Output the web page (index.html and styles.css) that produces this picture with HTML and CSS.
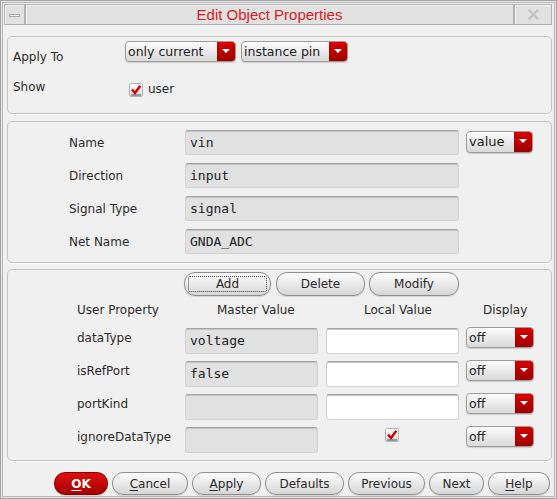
FILE: index.html
```html
<!DOCTYPE html>
<html>
<head>
<meta charset="utf-8">
<link rel="stylesheet" href="styles.css">
</head>
<body>
<div class="win">
  <div class="titlebar">
    <div class="tb-box tb-menu"><span class="dash"></span></div>
    <div class="tb-box tb-title">Edit Object Properties</div>
    <div class="tb-box tb-close">
      <svg width="13" height="13" viewBox="0 0 13 13"><path d="M2 2 L11 11 M11 2 L2 11" stroke="#c4c4c4" stroke-width="2.4" fill="none"/><path d="M1.5 4 V1.5 H4 M9 1.5 H11.5 V4 M11.5 9 V11.5 H9 M4 11.5 H1.5 V9" stroke="#d0d0d0" stroke-width="1" fill="none"/></svg>
    </div>
  </div>

  <section class="frame f1">
    <div class="row r-apply">
      <span class="lbl">Apply To</span>
      <div class="combo c-only"><span class="ctext">only current</span><span class="carrow"></span></div>
      <div class="combo c-inst"><span class="ctext">instance pin</span><span class="carrow"></span></div>
    </div>
    <div class="row r-show">
      <span class="lbl lbl-show">Show</span>
      <span class="check">
        <svg width="14" height="14" viewBox="0 0 14 14"><defs><linearGradient id="cg" x1="0" y1="0" x2="0" y2="1"><stop offset="0" stop-color="#ffffff"/><stop offset="1" stop-color="#d8d8d8"/></linearGradient></defs><rect x="0.5" y="0.5" width="13" height="13" rx="1.5" fill="url(#cg)" stroke="#b4b4b4"/><path d="M3 6.5 L6 10 L11.3 2.8" stroke="#d10000" stroke-width="2.4" fill="none"/><path d="M2 12 H12" stroke="#555" stroke-width="1"/></svg>
      </span>
      <span class="user">user</span>
    </div>
  </section>

  <section class="frame f2">
    <div class="prow">
      <span class="plbl">Name</span>
      <div class="field wide">vin</div>
      <div class="combo c-value"><span class="ctext">value</span><span class="carrow"></span></div>
    </div>
    <div class="prow">
      <span class="plbl">Direction</span>
      <div class="field wide">input</div>
    </div>
    <div class="prow">
      <span class="plbl">Signal Type</span>
      <div class="field wide">signal</div>
    </div>
    <div class="prow">
      <span class="plbl">Net Name</span>
      <div class="field wide">GNDA_ADC</div>
    </div>
  </section>

  <section class="frame f3">
    <div class="btnrow">
      <button class="btn b-add"><span class="focus">Add</span></button>
      <button class="btn b-del">Delete</button>
      <button class="btn b-mod">Modify</button>
    </div>
    <div class="hdr">
      <span class="h-prop">User Property</span>
      <span class="h-master">Master Value</span>
      <span class="h-local">Local Value</span>
      <span class="h-disp">Display</span>
    </div>
    <div class="urow">
      <span class="ulbl">dataType</span>
      <div class="field master">voltage</div>
      <div class="field local"></div>
      <div class="combo c-off"><span class="ctext">off</span><span class="carrow"></span></div>
    </div>
    <div class="urow">
      <span class="ulbl">isRefPort</span>
      <div class="field master">false</div>
      <div class="field local"></div>
      <div class="combo c-off"><span class="ctext">off</span><span class="carrow"></span></div>
    </div>
    <div class="urow">
      <span class="ulbl">portKind</span>
      <div class="field master"></div>
      <div class="field local"></div>
      <div class="combo c-off"><span class="ctext">off</span><span class="carrow"></span></div>
    </div>
    <div class="urow">
      <span class="ulbl">ignoreDataType</span>
      <div class="field master"></div>
      <div class="localcheck">
        <svg width="14" height="14" viewBox="0 0 14 14"><defs><linearGradient id="cg2" x1="0" y1="0" x2="0" y2="1"><stop offset="0" stop-color="#ffffff"/><stop offset="1" stop-color="#d8d8d8"/></linearGradient></defs><rect x="0.5" y="0.5" width="13" height="13" rx="1.5" fill="url(#cg2)" stroke="#b4b4b4"/><path d="M3 6.5 L6 10 L11.3 2.8" stroke="#d10000" stroke-width="2.4" fill="none"/><path d="M2 12 H12" stroke="#555" stroke-width="1"/></svg>
      </div>
      <div class="combo c-off"><span class="ctext">off</span><span class="carrow"></span></div>
    </div>
  </section>

  <div class="footer">
    <button class="btn ok"><u>O</u>K</button>
    <button class="btn w-cancel"><u>C</u>ancel</button>
    <button class="btn w-apply"><u>A</u>pply</button>
    <button class="btn w-def">Defaults</button>
    <button class="btn w-prev">Previous</button>
    <button class="btn w-next">Next</button>
    <button class="btn w-help"><u>H</u>elp</button>
  </div>
</div>
</body>
</html>
```

FILE: styles.css
```css
* { box-sizing: border-box; }
html, body { margin: 0; padding: 0; }
body {
  width: 557px;
  height: 499px;
  overflow: hidden;
  background: #f0f0f0;
  font-family: "DejaVu Sans", sans-serif;
  font-size: 12px;
  color: #2c2c2c;
}
.win {
  width: 557px;
  height: 499px;
  border: 1px solid #a2a2a2;
  box-shadow: inset 0 0 0 1px #e6e6e6, inset 0 0 0 2px #b8b8b8;
  padding: 3px 4px 0 3px;
  display: flex;
  flex-direction: column;
  background: #f0f0f0;
}
.titlebar {
  display: flex;
  height: 21px;
}
.tb-box {
  background: #e1e1e1;
  border: 1px solid #b2b2b2;
  box-shadow: inset 1px 1px 0 #f4f4f4;
  height: 21px;
}
.tb-menu {
  width: 21px;
  display: flex;
  align-items: center;
  justify-content: center;
}
.dash {
  display: block;
  width: 11px;
  height: 3px;
  background: #fafafa;
  border: 1px solid #a9a9a9;
  margin-top: 1px;
}
.tb-title {
  flex: 1;
  text-align: center;
  color: #d11f1f;
  font-family: "Liberation Sans", sans-serif;
  font-size: 15px;
  line-height: 19px;
}
.tb-close {
  width: 38px;
  display: flex;
  align-items: center;
  justify-content: center;
}

.frame {
  border: 1px solid #c4c4c4;
  border-radius: 5px;
  margin-left: 3px;
  box-shadow: 0 1px 0 #fbfbfb;
}
.f1 {
  margin-top: 11px;
  height: 78px;
  padding: 4px 0 0 5px;
}
.row { display: flex; align-items: flex-start; }
.r-apply { height: 21px; }
.lbl {
  width: 112px;
  line-height: 14px;
  padding-top: 9px;
}
.r-show { margin-top: 17px; height: 21px; }
.lbl-show { padding-top: 1px; }
.check { margin: 4px 0 0 4px; display: block; height: 14px; }
.check svg, .localcheck svg { display: block; }
.user { margin-left: 5px; padding-top: 3px; line-height: 14px; }

.combo {
  display: flex;
  height: 21px;
  border: 1px solid #9c9c9c;
  border-radius: 4px;
  background: linear-gradient(#fcfcfc, #d9d9d9);
  overflow: hidden;
  box-shadow: 0 1px 1px rgba(0,0,0,0.15);
}
.ctext {
  flex: 1;
  padding-left: 2px;
  line-height: 19px;
  font-size: 12.5px;
  color: #222;
  white-space: nowrap;
}
.carrow {
  width: 18px;
  background: linear-gradient(#d70000, #9e0000);
  position: relative;
}
.carrow::after {
  content: "";
  position: absolute;
  left: 5px;
  top: 7px;
  border-left: 4px solid transparent;
  border-right: 4px solid transparent;
  border-top: 4px solid #fff;
}
.c-only { width: 111px; }
.c-inst { width: 107px; margin-left: 5px; }
.c-value { width: 67px; height: 22px; margin-left: 7px; margin-top: -1px; }
.c-value .ctext { font-size: 13px; line-height: 20px; }
.c-off { width: 68px; margin-left: 7px; margin-top: -1px; }

.f2 {
  margin-top: 7px;
  height: 142px;
  padding: 8px 0 0 61px;
  display: flex;
  flex-direction: column;
  gap: 8px;
}
.prow { display: flex; align-items: center; height: 25px; }
.plbl { width: 116px; line-height: 14px; }

.field {
  height: 25px;
  background: #e1e1e1;
  border: 1px solid #d2d2d2;
  border-top: 1px solid #a3a3a3;
  border-radius: 3px;
  box-shadow: inset 0 1px 0 #c4c4c4;
  font-family: "DejaVu Sans Mono", monospace;
  font-size: 13px;
  line-height: 23px;
  padding-left: 4px;
  color: #222;
}
.wide { width: 274px; }

.f3 {
  margin-top: 6px;
  height: 192px;
  padding: 2px 0 0 0;
}
.btnrow {
  display: flex;
  padding-left: 176px;
  height: 24px;
}
.btn {
  height: 24px;
  border: 1px solid #8e8e8e;
  border-radius: 11px;
  background: linear-gradient(#fdfdfd, #d6d6d6);
  font-family: "DejaVu Sans", sans-serif;
  font-size: 12px;
  color: #2a2a2a;
  padding: 0;
  margin: 0;
  box-shadow: 0 1px 1px rgba(0,0,0,0.12);
}
.btn u { text-decoration: underline; text-underline-offset: 2px; }
.b-add { width: 87px; padding: 3px; }
.focus {
  display: block;
  height: 100%;
  border: 1px dotted #444;
  border-radius: 2px;
  line-height: 15px;
}
.b-del { width: 89px; margin-left: 5px; }
.b-mod { width: 90px; margin-left: 4px; }

.hdr {
  display: flex;
  height: 32px;
  padding-top: 7px;
  line-height: 14px;
  white-space: nowrap;
}
.h-prop { margin-left: 69px; width: 140px; }
.h-master { width: 147px; }
.h-local { width: 119px; }
.h-disp { }

.urow {
  display: flex;
  align-items: flex-start;
  height: 26px;
  margin-bottom: 7px;
  padding-left: 69px;
}
.ulbl { width: 108px; line-height: 14px; padding-top: 3px; }
.field.master { width: 133px; height: 26px; line-height: 24px; }
.field.local {
  width: 133px;
  height: 26px;
  margin-left: 8px;
  background: #ffffff;
}
.localcheck {
  width: 133px;
  margin-left: 8px;
  display: flex;
  justify-content: center;
  padding: 1px 2px 0 0;
}

.footer {
  display: flex;
  justify-content: flex-end;
  gap: 4px;
  margin-top: 11px;
  margin-right: 2px;
  height: 23px;
}
.footer .btn { height: 23px; border-radius: 11px; }
.ok {
  width: 54px;
  background: linear-gradient(#de1010, #a60000);
  border-color: #8a0000;
  color: #fff;
  font-weight: bold;
}
.w-cancel { width: 76px; }
.w-apply { width: 69px; }
.w-def { width: 79px; }
.w-prev { width: 77px; }
.w-next { width: 55px; }
.w-help { width: 62px; }
```
